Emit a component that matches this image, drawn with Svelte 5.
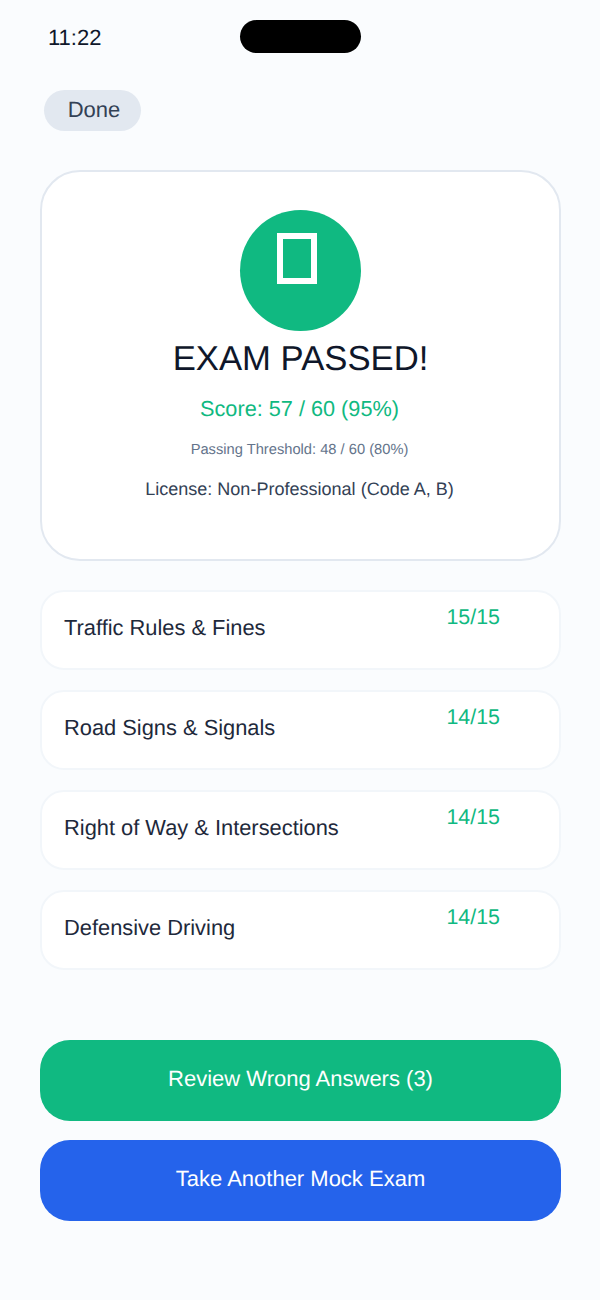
<script lang="ts">
  const sections = [
    { name: "Traffic Rules & Fines", score: "15/15" },
    { name: "Road Signs & Signals", score: "14/15" },
    { name: "Right of Way & Intersections", score: "14/15" },
    { name: "Defensive Driving", score: "14/15" },
  ];
</script>

<div class="screen">
  <div class="status">
    <span class="time">11:22</span>
    <div class="notch"></div>
  </div>

  <button class="done">Done</button>

  <div class="card">
    <div class="badge"><div class="tofu"></div></div>
    <h1>EXAM PASSED!</h1>
    <p class="score">Score: 57 / 60 (95%)</p>
    <p class="threshold">Passing Threshold: 48 / 60 (80%)</p>
    <p class="license">License: Non-Professional (Code A, B)</p>
  </div>

  <div class="rows">
    {#each sections as s}
      <div class="row">
        <span class="name">{s.name}</span>
        <span class="pts">{s.score}</span>
      </div>
    {/each}
  </div>

  <div class="actions">
    <button class="cta green">Review Wrong Answers (3)</button>
    <button class="cta blue">Take Another Mock Exam</button>
  </div>
</div>

<style>
  :global(body) {
    margin: 0;
    background: #fafcfe;
  }

  .screen {
    width: 600px;
    height: 1300px;
    box-sizing: border-box;
    padding: 20px 40px 0;
    background: #fafcfe;
    font-family: "Liberation Sans", Arial, sans-serif;
    text-rendering: geometricPrecision;
    display: flex;
    flex-direction: column;
  }

  .status {
    display: flex;
    align-items: center;
    height: 33px;
  }

  .time {
    margin-left: 8px;
    width: 192px;
    font-size: 22px;
    color: #0f172a;
    line-height: 33px;
    margin-top: 2px;
  }

  .notch {
    width: 121px;
    height: 33px;
    border-radius: 17px;
    background: #000;
  }

  .done {
    align-self: flex-start;
    margin: 37px 0 39px 4px;
    width: 97px;
    height: 41px;
    padding: 0 0 2px 3px;
    border: none;
    border-radius: 21px;
    background: #e2e8f0;
    color: #334155;
    font: 22px "Liberation Sans", Arial, sans-serif;
    text-rendering: geometricPrecision;
    text-align: center;
  }

  .card {
    box-sizing: border-box;
    width: 521px;
    height: 391px;
    padding-top: 38px;
    background: #fff;
    border: 2px solid #e2e8f0;
    border-radius: 40px;
    display: flex;
    flex-direction: column;
    align-items: center;
  }

  .badge {
    width: 121px;
    height: 121px;
    flex-shrink: 0;
    border-radius: 50%;
    background: #10b981;
    display: flex;
    justify-content: center;
    padding: 23px 8px 0 0;
    box-sizing: border-box;
  }

  .tofu {
    box-sizing: border-box;
    width: 40px;
    height: 51px;
    border: 6px solid #fff;
  }

  h1 {
    margin: 7px 0 0;
    font-size: 34.7px;
    font-weight: 400;
    line-height: 42px;
    color: #0f172a;
  }

  p {
    margin: 0;
    padding-right: 2px;
  }

  .score {
    margin-top: 16px;
    font-size: 21.7px;
    line-height: 26px;
    color: #10b981;
  }

  .threshold {
    margin-top: 19px;
    font-size: 14.7px;
    line-height: 18px;
    color: #64748b;
  }

  .license {
    margin-top: 20px;
    font-size: 18.05px;
    line-height: 21px;
    color: #334155;
  }

  .rows {
    margin-top: 29px;
    display: flex;
    flex-direction: column;
    gap: 20px;
  }

  .row {
    box-sizing: border-box;
    width: 521px;
    height: 80px;
    padding: 0 59px 0 22px;
    background: #fff;
    border: 2px solid #f2f6fa;
    border-radius: 24px;
    display: flex;
    justify-content: space-between;
  }

  .name {
    margin-top: 22px;
    font-size: 21.85px;
    line-height: 28px;
    color: #1e293b;
  }

  .pts {
    margin-top: 12px;
    font-size: 21.4px;
    line-height: 26px;
    color: #10b981;
  }

  .actions {
    margin-top: 70px;
    display: flex;
    flex-direction: column;
    gap: 19px;
  }

  .cta {
    width: 521px;
    height: 81px;
    padding: 0 0 4px;
    border: none;
    border-radius: 30px;
    color: #fff;
    font: 22px "Liberation Sans", Arial, sans-serif;
    text-rendering: geometricPrecision;
  }

  .green {
    background: #10b981;
  }

  .blue {
    background: #2563eb;
  }
</style>
